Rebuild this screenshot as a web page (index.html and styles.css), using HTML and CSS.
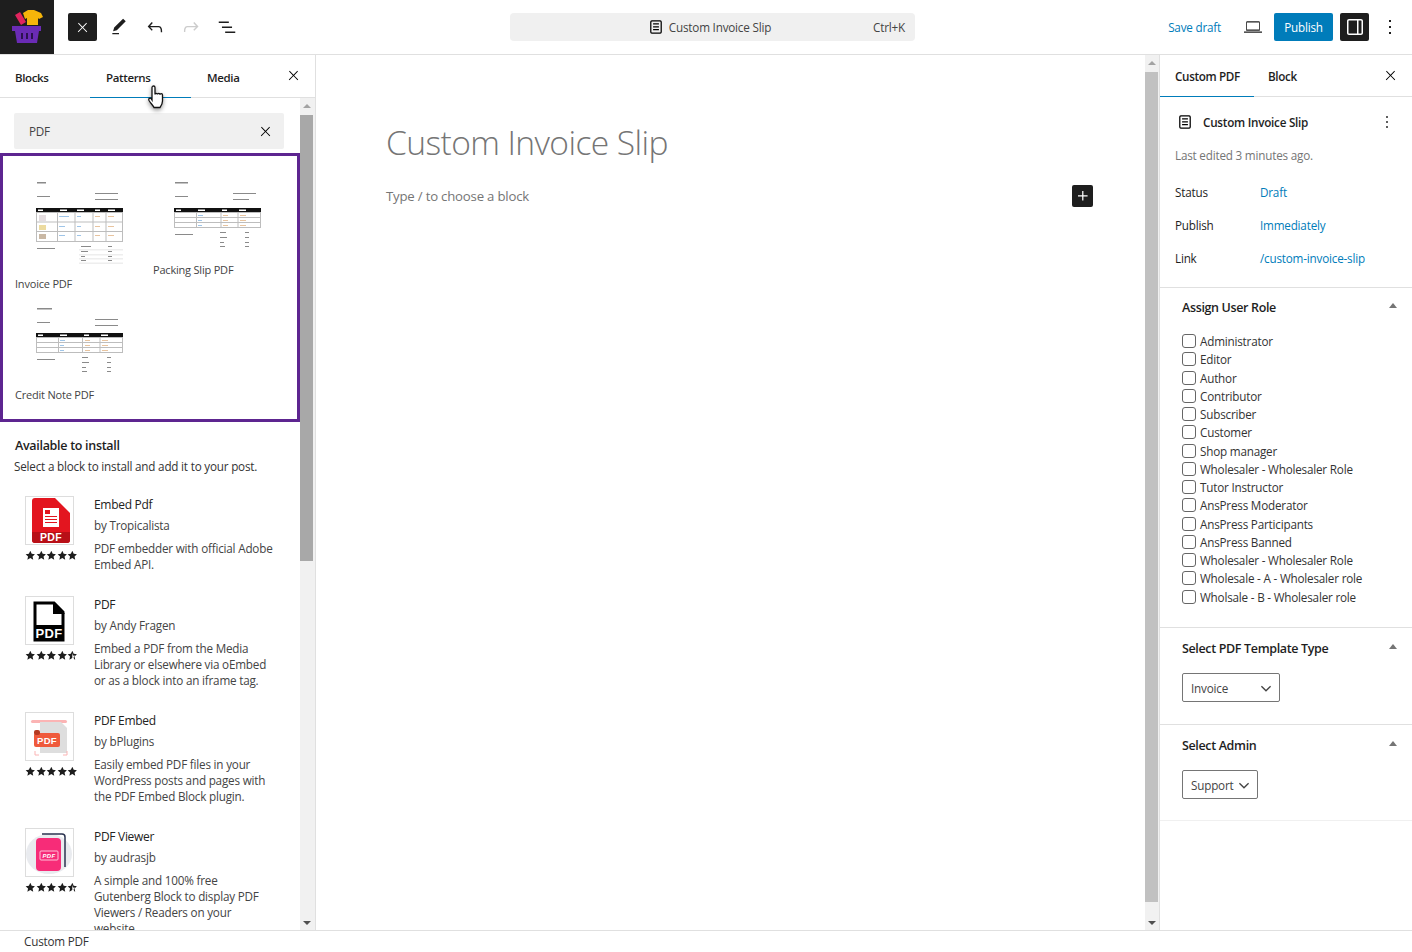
FILE: index.html
```html
<!DOCTYPE html>
<html lang="en">
<head>
    <meta charset="UTF-8">
    <title>Custom Invoice Slip</title>
    <link rel="stylesheet" href="styles.css">
</head>
<body>

<!-- shared icons -->
<svg class="defs" width="0" height="0">
    <symbol id="i-close" viewBox="0 0 24 24"><path d="M13 11.8l6.1-6.3-1-1-6.1 6.2-6.1-6.2-1 1 6.1 6.3-6.5 6.7 1 1 6.5-6.6 6.5 6.6 1-1z"/></symbol>
    <symbol id="i-page" viewBox="0 0 24 24"><path d="M15.5 7.5h-7V9h7V7.5Zm-7 3.5h7v1.5h-7V11Zm7 3.5h-7V16h7v-1.5Z"/><path d="M17 4H7a2 2 0 0 0-2 2v12a2 2 0 0 0 2 2h10a2 2 0 0 0 2-2V6a2 2 0 0 0-2-2ZM7 5.5h10a.5.5 0 0 1 .5.5v12a.5.5 0 0 1-.5.5H7a.5.5 0 0 1-.5-.5V6a.5.5 0 0 1 .5-.5Z"/></symbol>
    <symbol id="i-more" viewBox="0 0 24 24"><path d="M13 19h-2v-2h2v2zm0-6h-2v-2h2v2zm0-6h-2V5h2v2z"/></symbol>
    <symbol id="i-star" viewBox="0 0 24 24"><path d="M12 1.5l3.2 6.8 7.3.9-5.4 5 1.5 7.3-6.6-3.7-6.6 3.7 1.5-7.3-5.4-5 7.3-.9z"/></symbol>
    <symbol id="i-half" viewBox="0 0 24 24"><path d="M12 1.5l3.2 6.8 7.3.9-5.4 5 1.5 7.3-6.6-3.7-6.6 3.7 1.5-7.3-5.4-5 7.3-.9zm0 5v11.2l3.8 2.1-.9-4.4 3.3-3-4.5-.6z"/></symbol>
    <symbol id="i-chevron" viewBox="0 0 24 24"><path d="M17.5 10.6L12 16l-5.5-5.4 1-1.1 4.5 4.4 4.5-4.4z"/></symbol>
</svg>

<header class="topbar">
    <div class="logo">
        <svg width="34" height="34" viewBox="0 0 34 34">
            <path d="M5 5l5-3 6 10-5 3z" fill="#e0245e"/>
            <path d="M13 3l5-3h6l7 3 2 4-4 2-1-1v7H17V8l-2 1z" fill="#f5b50a"/>
            <path d="M2 16h29v5h-2l-2 12H7L5 21H2z" fill="#6a2bb5"/>
            <path d="M11 23h2v6h-2zm5 0h2v6h-2zm5 0h2v6h-2z" fill="#2c1250"/>
        </svg>
    </div>
    <div class="tools">
        <button class="tool tool-dark"><svg width="15" height="15"><use href="#i-close"/></svg></button>
        <button class="tool"><svg width="20" height="20" viewBox="0 0 24 24"><path d="M20.1 5.1L16.9 2 6.2 12.7l-1.3 4.4 4.5-1.3L20.1 5.1zM4 20.8h8v-1.5H4v1.5z"/></svg></button>
        <button class="tool"><svg width="22" height="22" viewBox="0 0 24 24"><path d="M18.3 11.7c-.6-.6-1.4-.9-2.3-.9H6.7l2.9-3.3-1.1-1-4.5 5L8.5 16l1-1-2.7-2.7H16c.5 0 .9.2 1.3.5 1 1 1 3.4 1 4.5v.3h1.5v-.2c0-1.5 0-4.3-1.5-5.7z"/></svg></button>
        <button class="tool tool-off"><svg width="22" height="22" viewBox="0 0 24 24"><path d="M15.6 6.5l-1.1 1 2.9 3.3H8c-.9 0-1.7.3-2.3.9-1.4 1.5-1.4 4.2-1.4 5.6v.2h1.5v-.3c0-1.1 0-3.5 1-4.5.3-.3.7-.5 1.3-.5h9.2L14.5 15l1.1 1.1 4.6-4.6-4.6-5z"/></svg></button>
        <button class="tool"><svg width="22" height="22" viewBox="0 0 24 24"><path d="M3 6h11v1.5H3V6zm3.5 5.5h11V13h-11v-1.5zM21 17H10v1.5h11V17z"/></svg></button>
    </div>
    <div class="command">
        <div class="command-title"><svg width="20" height="20"><use href="#i-page"/></svg>Custom Invoice Slip</div>
        <span class="command-key">Ctrl+K</span>
    </div>
    <div class="actions">
        <a class="save-draft">Save draft</a>
        <button class="tool tool-view"><svg width="24" height="24" viewBox="0 0 24 24"><path d="M6 6.2h12c.4 0 .8.4.8.8v8.8H5.2V7c0-.4.4-.8.8-.8zm0 1.3v7h12v-7zM3 16.5h18v1.3H3z" fill-rule="evenodd"/></svg></button>
        <button class="publish">Publish</button>
        <button class="tool tool-dark tool-settings"><svg width="24" height="24" viewBox="0 0 24 24"><path d="M18 4H6c-1.1 0-2 .9-2 2v12c0 1.1.9 2 2 2h12c1.1 0 2-.9 2-2V6c0-1.1-.9-2-2-2zM6 5.5h8v13H6a.5.5 0 0 1-.5-.5V6c0-.3.2-.5.5-.5zm12.5 12.5c0 .3-.2.5-.5.5h-2.5v-13H18c.3 0 .5.2.5.5v12z"/></svg></button>
        <button class="tool tool-dots"><svg width="24" height="24"><use href="#i-more"/></svg></button>
    </div>
</header>

<div class="workspace">

    <!-- block inserter -->
    <aside class="inserter">
        <div class="inserter-tabs">
            <span class="ins-tab">Blocks</span>
            <span class="ins-tab ins-tab-active">Patterns</span>
            <span class="ins-tab">Media</span>
            <svg class="ins-close" width="15" height="15"><use href="#i-close"/></svg>
        </div>
        <div class="inserter-body">
            <div class="inserter-scroll">
                <div class="search"><span>PDF</span><svg width="15" height="15"><use href="#i-close"/></svg></div>

                <div class="patterns">
                    <figure class="pattern">
                        <svg class="thumb" width="88" height="84" viewBox="0 0 88 84">
                            <g fill="#8a8a8a">
                                <rect x="1" y="2" width="9" height="1.5"/><rect x="1" y="16" width="13" height="1"/>
                                <rect x="59" y="13" width="23" height="1"/><rect x="59" y="19" width="23" height="1"/>
                                <rect x="1" y="68" width="18" height="1"/><rect x="45" y="66" width="10" height="1"/><rect x="45" y="71" width="7" height="1"/><rect x="45" y="76" width="4" height="1"/><rect x="45" y="80" width="5" height="1"/>
                                <rect x="72" y="66" width="4" height="1"/><rect x="72" y="71" width="4" height="1"/><rect x="72" y="76" width="4" height="1"/><rect x="72" y="80" width="4" height="1"/>
                            </g>
                            <rect y="28" width="87" height="5" fill="#111"/>
                            <g fill="none" stroke="#bdbdbd"><rect x=".5" y="32.5" width="86" height="29"/><path d="M0 42h87M0 51.5h87M21.5 33v29M39 33v29M57 33v29M70 33v29"/></g>
                            <g fill="#9fc5e8"><rect x="23" y="36" width="10" height="1"/><rect x="41" y="36" width="4" height="1"/><rect x="23" y="46" width="6" height="1"/><rect x="41" y="46" width="4" height="1"/><rect x="23" y="55" width="6" height="1"/><rect x="41" y="55" width="4" height="1"/></g>
                            <g fill="#e8c49f"><rect x="59" y="36" width="5" height="1"/><rect x="72" y="36" width="6" height="1"/><rect x="59" y="46" width="5" height="1"/><rect x="72" y="46" width="6" height="1"/><rect x="59" y="55" width="5" height="1"/><rect x="72" y="55" width="6" height="1"/></g>
                            <rect x="3" y="35" width="7" height="6" fill="#e4dde0"/><rect x="3" y="45" width="7" height="5" fill="#ecdba0"/><rect x="3" y="54" width="7" height="5" fill="#c9b8a4"/>
                            <g fill="#eee"><rect x="43" y="69" width="44" height="1.5"/><rect x="43" y="74" width="44" height="1.5"/><rect x="43" y="78" width="44" height="1.5"/><rect x="43" y="82.5" width="44" height="1.5"/></g>
                            <g fill="#fff"><rect x="2" y="29.5" width="5" height="1.5"/><rect x="24" y="29.5" width="7" height="1.5"/><rect x="41" y="29.5" width="7" height="1.5"/><rect x="59" y="29.5" width="5" height="1.5"/><rect x="72" y="29.5" width="7" height="1.5"/></g>
                        </svg>
                        <figcaption>Invoice PDF</figcaption>
                    </figure>
                    <figure class="pattern">
                        <svg class="thumb" width="87" height="70" viewBox="0 0 87 70">
                            <g fill="#8a8a8a">
                                <rect x="1" y="2" width="13" height="1.5"/><rect x="1" y="16" width="13" height="1"/>
                                <rect x="59" y="13" width="23" height="1"/><rect x="59" y="19" width="16" height="1"/>
                                <rect x="1" y="54" width="18" height="1"/><rect x="46" y="52" width="6" height="1"/><rect x="46" y="57" width="7" height="1"/><rect x="46" y="62" width="4" height="1"/><rect x="46" y="66" width="5" height="1"/>
                                <rect x="71" y="52" width="4" height="1"/><rect x="71" y="57" width="4" height="1"/><rect x="71" y="62" width="4" height="1"/><rect x="71" y="66" width="4" height="1"/>
                            </g>
                            <rect y="28" width="87" height="5" fill="#111"/>
                            <g fill="none" stroke="#bdbdbd"><rect x=".5" y="32.5" width="86" height="15"/><path d="M0 37.5h87M0 42.5h87M22.5 33v15M47 33v15M64 33v15"/></g>
                            <g fill="#9fc5e8"><rect x="24" y="35" width="5" height="1"/><rect x="24" y="40" width="4" height="1"/><rect x="24" y="45" width="4" height="1"/></g>
                            <g fill="#e8c49f"><rect x="49" y="35" width="5" height="1"/><rect x="66" y="35" width="6" height="1"/><rect x="49" y="40" width="5" height="1"/><rect x="66" y="40" width="6" height="1"/><rect x="49" y="45" width="5" height="1"/><rect x="66" y="45" width="6" height="1"/></g>
                            <g fill="#fff"><rect x="2" y="29.5" width="5" height="1.5"/><rect x="24" y="29.5" width="7" height="1.5"/><rect x="48" y="29.5" width="5" height="1.5"/><rect x="65" y="29.5" width="7" height="1.5"/></g>
                        </svg>
                        <figcaption>Packing Slip PDF</figcaption>
                    </figure>
                    <figure class="pattern">
                        <svg class="thumb" width="88" height="68" viewBox="0 0 88 68">
                            <g fill="#8a8a8a">
                                <rect x="1" y="1" width="15" height="1.5"/><rect x="1" y="15" width="13" height="1"/>
                                <rect x="59" y="12" width="23" height="1"/><rect x="59" y="18" width="23" height="1"/>
                                <rect x="1" y="52" width="18" height="1"/><rect x="46" y="50" width="6" height="1"/><rect x="46" y="55" width="7" height="1"/><rect x="46" y="60" width="4" height="1"/><rect x="46" y="64" width="5" height="1"/>
                                <rect x="71" y="50" width="4" height="1"/><rect x="71" y="55" width="4" height="1"/><rect x="71" y="60" width="4" height="1"/><rect x="71" y="64" width="4" height="1"/>
                            </g>
                            <rect y="26" width="87" height="5" fill="#111"/>
                            <g fill="none" stroke="#bdbdbd"><rect x=".5" y="30.5" width="86" height="15"/><path d="M0 35.5h87M0 40.5h87M22.5 31v15M46.5 31v15M64 31v15"/></g>
                            <g fill="#9fc5e8"><rect x="24" y="33" width="5" height="1"/><rect x="24" y="38" width="4" height="1"/><rect x="24" y="43" width="4" height="1"/></g>
                            <g fill="#e8c49f"><rect x="49" y="33" width="5" height="1"/><rect x="66" y="33" width="6" height="1"/><rect x="49" y="38" width="5" height="1"/><rect x="66" y="38" width="6" height="1"/><rect x="49" y="43" width="5" height="1"/><rect x="66" y="43" width="6" height="1"/></g>
                            <g fill="#fff"><rect x="2" y="27.5" width="5" height="1.5"/><rect x="24" y="27.5" width="7" height="1.5"/><rect x="48" y="27.5" width="5" height="1.5"/><rect x="65" y="27.5" width="7" height="1.5"/></g>
                        </svg>
                        <figcaption>Credit Note PDF</figcaption>
                    </figure>
                </div>

                <div class="install-head">
                    <h3>Available to install</h3>
                    <p>Select a block to install and add it to your post.</p>
                </div>

                <div class="plugin">
                    <div class="plugin-side">
                        <div class="plugin-icon">
                            <svg width="47" height="47" viewBox="0 0 47 47">
                                <path d="M9 1h20l15 15v27a3 3 0 0 1-3 3H9a3 3 0 0 1-3-3V4a3 3 0 0 1 3-3z" fill="#e3151f"/>
                                <path d="M6 35h38v8a3 3 0 0 1-3 3H9a3 3 0 0 1-3-3z" fill="#b80f17"/>
                                <rect x="17" y="11" width="16" height="19" fill="#fff"/>
                                <path d="M19 13h5v4h-5zm0 6h12v1h-12zm0 3h12v1h-12zm0 3h12v1h-12z" fill="#e3151f"/>
                                <text x="25" y="44" class="icon-text">PDF</text>
                            </svg>
                        </div>
                        <div class="stars"><svg><use href="#i-star"/></svg><svg><use href="#i-star"/></svg><svg><use href="#i-star"/></svg><svg><use href="#i-star"/></svg><svg><use href="#i-star"/></svg></div>
                    </div>
                    <div class="plugin-info">
                        <h4>Embed Pdf</h4>
                        <div class="by">by Tropicalista</div>
                        <p>PDF embedder with official Adobe Embed API.</p>
                    </div>
                </div>

                <div class="plugin">
                    <div class="plugin-side">
                        <div class="plugin-icon">
                            <svg width="47" height="47" viewBox="0 0 47 47">
                                <path d="M9 6h19l9 9v28H9z" fill="#fff" stroke="#000" stroke-width="3"/>
                                <path d="M27 5l12 12H27z" fill="#000"/>
                                <rect x="8" y="28" width="30" height="16" fill="#000"/>
                                <text x="23" y="41" class="icon-text icon-text-big">PDF</text>
                            </svg>
                        </div>
                        <div class="stars"><svg><use href="#i-star"/></svg><svg><use href="#i-star"/></svg><svg><use href="#i-star"/></svg><svg><use href="#i-star"/></svg><svg><use href="#i-half"/></svg></div>
                    </div>
                    <div class="plugin-info">
                        <h4>PDF</h4>
                        <div class="by">by Andy Fragen</div>
                        <p>Embed a PDF from the Media Library or elsewhere via oEmbed or as a block into an iframe tag.</p>
                    </div>
                </div>

                <div class="plugin">
                    <div class="plugin-side">
                        <div class="plugin-icon">
                            <svg width="47" height="47" viewBox="0 0 47 47">
                                <rect x="5" y="7" width="36" height="3" rx="1.5" fill="#fbb4b4"/>
                                <path d="M14 9h21l6 6v25H14z" fill="#dedede"/>
                                <rect x="8" y="20" width="26" height="14" rx="2" fill="#ef5a3c"/>
                                <rect x="8" y="17" width="6" height="5" rx="2" fill="#b53a22"/>
                                <text x="21" y="31" class="icon-text icon-text-sm">PDF</text>
                                <path d="M9 38v4h4M37 42h4v-4" fill="none" stroke="#fbb4b4"/>
                            </svg>
                        </div>
                        <div class="stars"><svg><use href="#i-star"/></svg><svg><use href="#i-star"/></svg><svg><use href="#i-star"/></svg><svg><use href="#i-star"/></svg><svg><use href="#i-star"/></svg></div>
                    </div>
                    <div class="plugin-info">
                        <h4>PDF Embed</h4>
                        <div class="by">by bPlugins</div>
                        <p>Easily embed PDF files in your WordPress posts and pages with the PDF Embed Block plugin.</p>
                    </div>
                </div>

                <div class="plugin">
                    <div class="plugin-side">
                        <div class="plugin-icon">
                            <svg width="47" height="47" viewBox="0 0 47 47">
                                <ellipse cx="23" cy="25" rx="23" ry="20" fill="#e9ebef"/>
                                <path d="M16 5h20a3 3 0 0 1 3 3v30" fill="none" stroke="#2b3350" stroke-width="1.5"/>
                                <rect x="10" y="9" width="25" height="33" rx="4" fill="#f72c78"/>
                                <rect x="14" y="22" width="18" height="9" rx="1" fill="none" stroke="#ffc0d8"/>
                                <text x="23" y="29" class="icon-text icon-text-xs">PDF</text>
                            </svg>
                        </div>
                        <div class="stars"><svg><use href="#i-star"/></svg><svg><use href="#i-star"/></svg><svg><use href="#i-star"/></svg><svg><use href="#i-star"/></svg><svg><use href="#i-half"/></svg></div>
                    </div>
                    <div class="plugin-info">
                        <h4>PDF Viewer</h4>
                        <div class="by">by audrasjb</div>
                        <p>A simple and 100% free Gutenberg Block to display PDF Viewers / Readers on your website</p>
                    </div>
                </div>
            </div>
            <div class="scrollbar scrollbar-left">
                <span class="arrow-up"></span>
                <span class="thumb-bar"></span>
                <span class="arrow-down"></span>
            </div>
        </div>
        <!-- mouse pointer over the Patterns tab -->
        <svg class="cursor" width="20" height="26" viewBox="0 0 20 26">
            <path d="M5 2.5c0-2 3-2 3 0v7c0-1.5 2.5-1.5 2.5 0 0-1.5 2.5-1.5 2.5.2 0-1.4 2.5-1.4 2.5.3v6c0 3-1.5 5-2.5 6.5H7c-1-2-3.5-4.5-5-7-1-2 1-3 2-2l1 1.500z" fill="#fff" stroke="#111" stroke-width="1.3"/>
        </svg>
    </aside>

    <!-- editor canvas -->
    <main class="canvas">
        <div class="canvas-inner">
            <h1 class="post-title">Custom Invoice Slip</h1>
            <div class="block-row">
                <span>Type / to choose a block</span>
                <button class="add-block"><svg width="20" height="20" viewBox="0 0 24 24" fill="#fff"><path d="M11 12.5V17.5H12.5V12.5H17.5V11H12.5V6H11V11H6V12.5H11Z"/></svg></button>
            </div>
        </div>
        <div class="scrollbar scrollbar-canvas">
            <span class="arrow-up"></span>
            <span class="thumb-bar"></span>
            <span class="arrow-down"></span>
        </div>
    </main>

    <!-- settings sidebar -->
    <aside class="sidebar">
        <div class="side-tabs">
            <span class="side-tab side-tab-active">Custom PDF</span>
            <span class="side-tab">Block</span>
            <svg class="side-close" width="15" height="15"><use href="#i-close"/></svg>
        </div>

        <section class="panel panel-post">
            <div class="post-head">
                <svg width="20" height="20"><use href="#i-page"/></svg>
                <span class="post-name">Custom Invoice Slip</span>
                <svg class="post-more" width="20" height="20"><use href="#i-more"/></svg>
            </div>
            <p class="edited">Last edited 3 minutes ago.</p>
            <dl class="meta">
                <dt>Status</dt><dd>Draft</dd>
                <dt>Publish</dt><dd>Immediately</dd>
                <dt>Link</dt><dd>/custom-invoice-slip</dd>
            </dl>
        </section>

        <section class="panel panel-roles">
            <h2 class="panel-title">Assign User Role<span class="caret"></span></h2>
            <ul class="roles">
                <li><input type="checkbox">Administrator</li>
                <li><input type="checkbox">Editor</li>
                <li><input type="checkbox">Author</li>
                <li><input type="checkbox">Contributor</li>
                <li><input type="checkbox">Subscriber</li>
                <li><input type="checkbox">Customer</li>
                <li><input type="checkbox">Shop manager</li>
                <li><input type="checkbox">Wholesaler - Wholesaler Role</li>
                <li><input type="checkbox">Tutor Instructor</li>
                <li><input type="checkbox">AnsPress Moderator</li>
                <li><input type="checkbox">AnsPress Participants</li>
                <li><input type="checkbox">AnsPress Banned</li>
                <li><input type="checkbox">Wholesaler - Wholesaler Role</li>
                <li><input type="checkbox">Wholesale - A - Wholesaler role</li>
                <li><input type="checkbox">Wholsale - B - Wholesaler role</li>
            </ul>
        </section>

        <section class="panel panel-select">
            <h2 class="panel-title">Select PDF Template Type<span class="caret"></span></h2>
            <div class="select select-wide"><span>Invoice</span><svg width="22" height="22"><use href="#i-chevron"/></svg></div>
        </section>

        <section class="panel panel-select panel-last">
            <h2 class="panel-title">Select Admin<span class="caret"></span></h2>
            <div class="select"><span>Support</span><svg width="22" height="22"><use href="#i-chevron"/></svg></div>
        </section>
    </aside>
</div>

<footer class="breadcrumb">Custom PDF</footer>

</body>
</html>
```

FILE: styles.css
```css
* {
    box-sizing: border-box;
}
html, body {
    height: 100%;
}
body {
    margin: 0;
    display: flex;
    flex-direction: column;
    overflow: hidden;
    font-family: "Open Sans", "Noto Sans", Arial, sans-serif;
    font-size: 11.7px;
    letter-spacing: -0.2px;
    color: #1e1e1e;
    background-color: #fff;
}
h1, h2, h3, h4, p, ul, dl, dd, figure {
    margin: 0;
    padding: 0;
}
button {
    padding: 0;
    border: 0;
    background: none;
    font: inherit;
    letter-spacing: inherit;
}
.defs {
    position: absolute;
}

/* top bar */
.topbar {
    flex: none;
    display: flex;
    align-items: center;
    height: 55px;
    border-bottom: 1px solid #e0e0e0;
    position: relative;
}
.logo {
    width: 54px;
    height: 54px;
    background-color: #1e1e1e;
    display: flex;
    align-items: center;
    justify-content: center;
}
.tools {
    display: flex;
    align-items: center;
    gap: 7px;
    margin-left: 14px;
}
.tool {
    width: 29px;
    height: 28px;
    display: flex;
    align-items: center;
    justify-content: center;
    border-radius: 2px;
    fill: #1e1e1e;
}
.tool-dark {
    background-color: #1e1e1e;
    fill: #fff;
}
.tool-off {
    fill: #ccc;
}
.command {
    position: absolute;
    left: 510px;
    top: 13px;
    width: 405px;
    height: 28px;
    display: flex;
    align-items: center;
    justify-content: center;
    background-color: #f0f0f0;
    border-radius: 4px;
    color: #444;
}
.command-title {
    display: flex;
    align-items: center;
    gap: 3px;
    margin-right: 8px;
}
.command-key {
    position: absolute;
    right: 10px;
}
.actions {
    margin-left: auto;
    display: flex;
    align-items: center;
}
.save-draft {
    color: #007cba;
    margin-right: 17px;
}
.tool-view {
    margin-right: 7px;
}
.publish {
    width: 59px;
    height: 28px;
    background-color: #007cba;
    border-radius: 2px;
    color: #fff;
    margin-right: 7px;
}
.tool-dots {
    margin: 0 8px 0 6px;
}

/* main columns */
.workspace {
    flex: 1;
    min-height: 0;
    display: flex;
}

/* inserter */
.inserter {
    width: 316px;
    flex: none;
    display: flex;
    flex-direction: column;
    border-right: 1px solid #e0e0e0;
    position: relative;
}
.inserter-tabs {
    flex: none;
    display: flex;
    align-items: center;
    height: 43px;
    border-bottom: 1px solid #e0e0e0;
    position: relative;
    font-size: 11.5px;
    font-weight: 600;
    letter-spacing: -0.35px;
}
.ins-tab {
    width: 101px;
    height: 43px;
    line-height: 45px;
    padding-left: 15px;
}
.ins-tab-active {
    margin-left: -11px;
    padding-left: 16px;
    border-bottom: 1px solid #007cba;
}
.ins-tab:last-of-type {
    padding-left: 16px;
}
.ins-close {
    position: absolute;
    right: 14px;
    top: 13px;
}
.inserter-body {
    flex: 1;
    min-height: 0;
    display: flex;
}
.inserter-scroll {
    flex: 1;
    min-width: 0;
    overflow: hidden;
}
.search {
    display: flex;
    align-items: center;
    justify-content: space-between;
    height: 36px;
    margin: 15px 16px 4px 14px;
    padding: 0 11px 0 15px;
    background-color: #f0f0f0;
    border-radius: 2px;
    color: #444;
}
.patterns {
    display: grid;
    grid-template-columns: 138px 131px;
    align-items: start;
    align-content: start;
    row-gap: 15px;
    height: 269px;
    padding: 24px 0 0 12px;
    border: 3px solid #5d2590;
}
.thumb {
    display: block;
    margin-left: 21px;
}
.pattern figcaption {
    height: 16px;
    line-height: 16px;
    margin-top: 12px;
    font-size: 11px;
    color: #444;
}
.install-head {
    padding: 15px 15px 0;
}
.install-head h3 {
    font-size: 12.5px;
    line-height: 18px;
    font-weight: 600;
    letter-spacing: -0.3px;
}
.install-head p {
    margin: 2px 0 0 -1px;
    line-height: 18px;
    color: #333;
}
.plugin {
    display: flex;
    margin: 21px 0 24px 25px;
}
.plugin + .plugin {
    margin-top: 0;
}
.plugin-side {
    width: 69px;
    flex: none;
}
.plugin-icon {
    width: 49px;
    height: 49px;
    border: 1px solid #ddd;
    overflow: hidden;
}
.plugin-icon svg {
    display: block;
}
.icon-text {
    font-family: "Liberation Sans", Arial, sans-serif;
    font-size: 10.5px;
    font-weight: 700;
    fill: #fff;
    text-anchor: middle;
    letter-spacing: 0.3px;
}
.icon-text-big {
    font-size: 13px;
}
.icon-text-sm {
    font-size: 9.5px;
}
.icon-text-xs {
    font-size: 6px;
    font-style: italic;
}
.stars {
    display: flex;
    margin-top: 5px;
    height: 11px;
}
.stars svg {
    width: 10.6px;
    height: 11px;
    fill: #1e1e1e;
}
.plugin-info {
    width: 180px;
    padding-top: 1px;
    line-height: 16px;
    color: #444;
}
.plugin-info h4 {
    font-size: 12px;
    font-weight: 500;
    line-height: 16px;
    letter-spacing: -0.3px;
    color: #222;
}
.by {
    margin-top: 4px;
}
.plugin-info p {
    margin-top: 7px;
}

/* scrollbars */
.scrollbar {
    flex: none;
    width: 15px;
    display: flex;
    flex-direction: column;
    background-color: #f1f1f1;
}
.scrollbar-left .thumb-bar {
    height: 446px;
    background-color: #a8a8a8;
}
.thumb-bar {
    width: 13px;
    display: block;
}
.scrollbar-canvas .thumb-bar {
    height: 830px;
    background-color: #c1c1c1;
}
.arrow-up, .arrow-down {
    display: block;
    width: 0;
    height: 0;
    margin-left: 3px;
    border-left: 4px solid transparent;
    border-right: 4px solid transparent;
}
.arrow-up {
    margin-top: 6px;
    margin-bottom: 7px;
    border-bottom: 4px solid #a3a3a3;
}
.arrow-down {
    margin-top: auto;
    margin-bottom: 5px;
    border-top: 4px solid #505050;
}
.cursor {
    position: absolute;
    left: 147px;
    top: 30px;
    filter: drop-shadow(0 2px 2px rgba(0, 0, 0, 0.4));
}

/* canvas */
.canvas {
    flex: 1;
    min-width: 0;
    display: flex;
}
.canvas-inner {
    flex: 1;
    padding: 63px 52px 0 70px;
}
.post-title {
    font-size: 33.6px;
    font-weight: 300;
    line-height: 48px;
    color: #757575;
    letter-spacing: -0.6px;
}
.block-row {
    display: flex;
    align-items: center;
    justify-content: space-between;
    margin-top: 19px;
    height: 22px;
    font-size: 13.2px;
    color: #757575;
}
.add-block {
    width: 21px;
    height: 22px;
    background-color: #1e1e1e;
    border-radius: 2px;
    display: flex;
    align-items: center;
    justify-content: center;
}
.scrollbar-canvas {
    border-right: 1px solid #e0e0e0;
    width: 15px;
}

/* sidebar */
.sidebar {
    width: 252px;
    flex: none;
}
.side-tabs {
    display: flex;
    height: 42px;
    border-bottom: 1px solid #e0e0e0;
    position: relative;
    font-weight: 600;
    letter-spacing: -0.35px;
}
.side-tab {
    height: 42px;
    line-height: 43px;
    padding-left: 15px;
    white-space: nowrap;
}
.side-tab-active {
    width: 94px;
    margin-right: -1px;
    border-bottom: 1px solid #007cba;
}
.side-close {
    position: absolute;
    right: 14px;
    top: 13px;
}
.panel {
    border-bottom: 1px solid #e0e0e0;
}
.panel-post {
    height: 191px;
    padding: 15px 15px 0;
}
.post-head {
    display: flex;
    align-items: center;
    height: 20px;
    gap: 8px;
    font-weight: 600;
    letter-spacing: -0.25px;
}
.post-more {
    margin-left: auto;
}
.edited {
    margin-top: 15px;
    line-height: 16px;
    color: #757575;
}
.meta {
    display: grid;
    grid-template-columns: 85px 1fr;
    grid-auto-rows: 33px;
    margin-top: 21px;
    line-height: 16px;
    align-items: start;
}
.meta dd {
    color: #007cba;
}
.panel-title {
    position: relative;
    font-size: 12.5px;
    font-weight: 600;
    letter-spacing: -0.35px;
    line-height: 18px;
}
.caret {
    position: absolute;
    right: 0;
    top: 4px;
    border-left: 4px solid transparent;
    border-right: 4px solid transparent;
    border-bottom: 5px solid #757575;
}
.panel-roles {
    height: 340px;
    padding: 11px 15px 0 22px;
}
.roles {
    list-style: none;
    margin-top: 15px;
}
.roles li {
    display: flex;
    align-items: center;
    height: 18.25px;
    color: #333;
}
.roles input {
    appearance: none;
    width: 14px;
    height: 14px;
    margin: 0 4px 0 0;
    border: 1px solid #666;
    border-radius: 3px;
    background-color: #fff;
}
.panel-select {
    height: 97px;
    padding: 12px 15px 0 22px;
}
.panel-last {
    height: 96px;
    border-bottom-color: #f0f0f0;
}
.select {
    display: inline-flex;
    align-items: center;
    justify-content: space-between;
    height: 29px;
    margin-top: 15px;
    padding: 0 2px 0 8px;
    border: 1px solid #757575;
    border-radius: 2px;
    color: #444;
    fill: #444;
}
.select span {
    padding-top: 1px;
}
.select-wide {
    width: 98px;
}
.breadcrumb {
    flex: none;
    height: 22px;
    line-height: 20px;
    padding-left: 24px;
    border-top: 1px solid #e0e0e0;
    color: #333;
}
```
